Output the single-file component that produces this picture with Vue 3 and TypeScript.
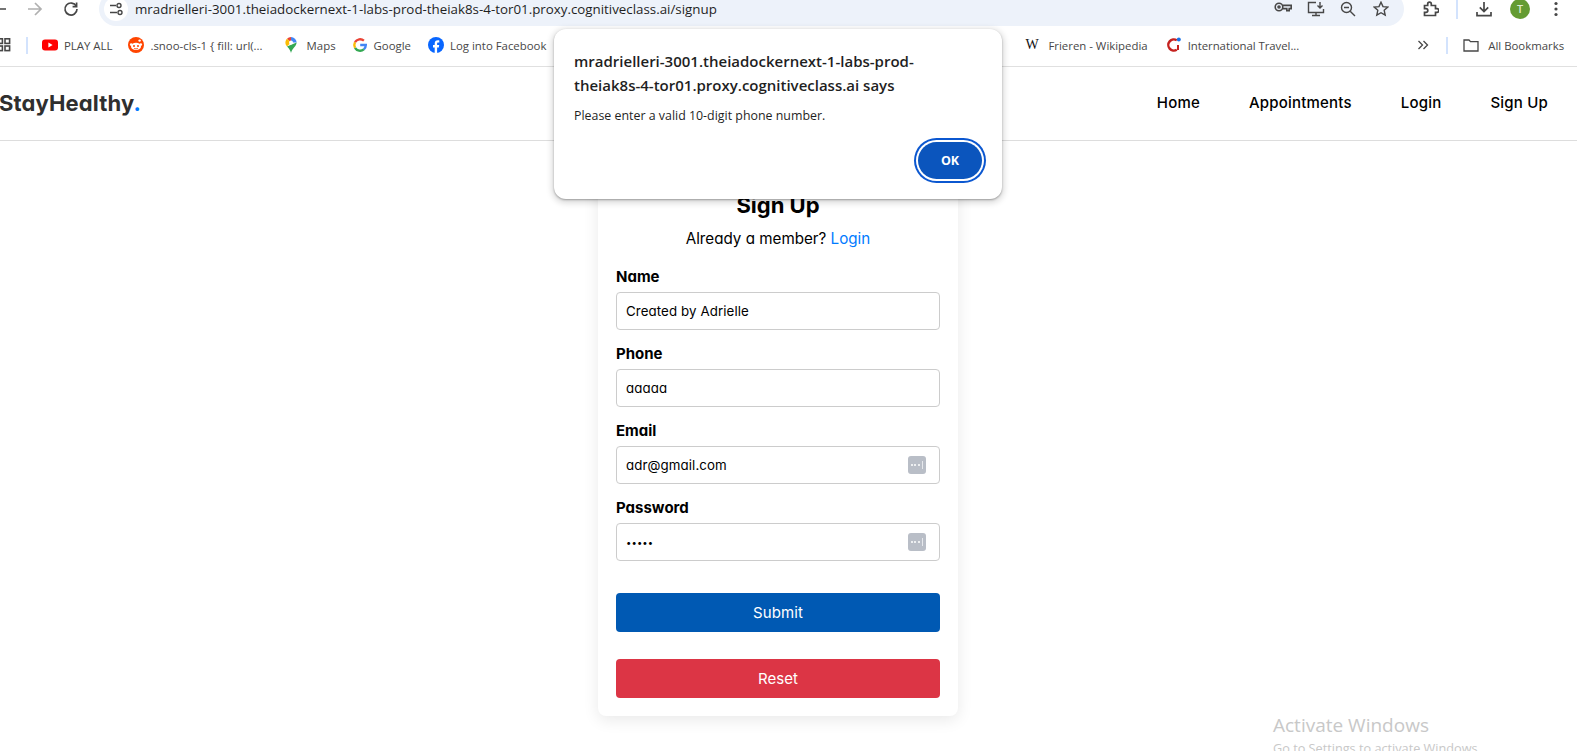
<script setup lang="ts">
import { ref } from 'vue'

const name = ref('Created by Adrielle')
const phone = ref('aaaaa')
const email = ref('adr@gmail.com')
const password = ref('aaaaa')
</script>

<template>
  <div class="screen">
    <!-- browser toolbar -->
    <div class="toolbar">
      <div class="cell">
        <svg width="16" height="16" viewBox="0 0 16 16" class="ico"><path d="M15 8H2M8 2 2 8l6 6" /></svg>
      </div>
      <div class="cell">
        <svg width="16" height="16" viewBox="0 0 16 16" class="ico muted"><path d="M1 8h13M8 2l6 6-6 6" /></svg>
      </div>
      <div class="cell">
        <svg width="16" height="16" viewBox="0 0 16 16" class="ico"><path d="M13.300 5.200A6 6 0 1 0 14 8" /><path d="M13.600 1.600v4h-4" /></svg>
      </div>
      <div class="urlbar">
        <div class="chip">
          <svg width="14" height="14" viewBox="0 0 14 14" class="ico thin">
            <path d="M1 3.500h6M1 10.500h7" />
            <circle cx="10" cy="3.500" r="2" />
            <circle cx="11" cy="10.500" r="2" />
          </svg>
        </div>
        <span class="url">mradrielleri-3001.theiadockernext-1-labs-prod-theiak8s-4-tor01.proxy.cognitiveclass.ai/signup</span>
        <div class="url-actions">
          <div class="ucell">
            <svg width="18" height="12" viewBox="0 0 18 12" class="ico key">
              <circle cx="5" cy="6" r="3.800" />
              <circle cx="5" cy="6" r="1" />
              <path d="M8.800 4.400h8.400v3.200h-2v2h-2.400v-2H8.800" />
            </svg>
          </div>
          <div class="ucell">
            <svg width="18" height="16" viewBox="0 0 18 16" class="ico thin">
              <path d="M9 1.500H1.500v10h15V8M5 14.500h8M9 11.500v3" />
              <path d="M13 1v6M10.500 4.600 13 7l2.500-2.400" />
            </svg>
          </div>
          <div class="ucell">
            <svg width="16" height="16" viewBox="0 0 16 16" class="ico thin">
              <circle cx="6.500" cy="6.500" r="5" />
              <path d="M4 6.500h5M10.200 10.200 15 15" />
            </svg>
          </div>
          <div class="ucell">
            <svg width="16" height="16" viewBox="0 0 16 16" class="ico thin">
              <path d="m8 1.200 2 4.400 4.800.5-3.600 3.200 1 4.800L8 11.700l-4.200 2.400 1-4.800-3.600-3.200 4.800-.5z" />
            </svg>
          </div>
        </div>
      </div>
      <div class="cell puzzle">
        <svg width="16" height="16" viewBox="0 0 16 16" class="ico">
          <path d="M1.500 4.500h3.200V3a1.800 1.800 0 0 1 3.600 0v1.500h4.200v3.200H14a1.800 1.800 0 0 1 0 3.600h-1.500v3.200h-11v-3.200H3a1.800 1.800 0 0 0 0-3.600H1.500z" />
        </svg>
      </div>
      <div class="divider"></div>
      <div class="cell download">
        <svg width="16" height="16" viewBox="0 0 16 16" class="ico">
          <path d="M8 1v9.500M3.800 6.400 8 10.600l4.200-4.200M1 11v3.600h14V11" />
        </svg>
      </div>
      <div class="cell">
        <div class="avatar">T</div>
      </div>
      <div class="cell">
        <svg width="4" height="16" viewBox="0 0 4 16"><circle cx="2" cy="2.500" r="1.600" fill="#474747" /><circle cx="2" cy="8" r="1.600" fill="#474747" /><circle cx="2" cy="13.500" r="1.600" fill="#474747" /></svg>
      </div>
    </div>

    <!-- bookmarks bar -->
    <div class="bookmarks">
      <svg class="apps" width="14" height="14" viewBox="0 0 14 14" fill="none" stroke="#474747" stroke-width="1.600">
        <rect x="0.800" y="0.800" width="4.600" height="4.600" />
        <rect x="8" y="0.800" width="4.600" height="4.600" />
        <rect x="0.800" y="8" width="4.600" height="4.600" />
        <rect x="8" y="8" width="4.600" height="4.600" />
      </svg>
      <div class="divider short"></div>
      <div class="bm yt">
        <svg width="16" height="16" viewBox="0 0 16 16"><rect y="2.500" width="16" height="11" rx="3" fill="#f00" /><path d="M6.400 5.500v5L10.600 8z" fill="#fff" /></svg>
        <span>PLAY ALL</span>
      </div>
      <div class="bm reddit">
        <svg width="16" height="16" viewBox="0 0 16 16">
          <circle cx="8" cy="8" r="8" fill="#ff4500" />
          <ellipse cx="8" cy="9.400" rx="5" ry="3.600" fill="#fff" />
          <circle cx="3.200" cy="7.600" r="1.300" fill="#fff" />
          <circle cx="12.800" cy="7.600" r="1.300" fill="#fff" />
          <circle cx="11.600" cy="3.600" r="1.200" fill="#fff" />
          <circle cx="6" cy="9" r="1" fill="#ff4500" />
          <circle cx="10" cy="9" r="1" fill="#ff4500" />
          <path d="M6 11.200c1 .8 3 .8 4 0" stroke="#ff4500" stroke-width=".8" fill="none" />
        </svg>
        <span>.snoo-cls-1 { fill: url(...</span>
      </div>
      <div class="bm maps">
        <svg width="16" height="16" viewBox="0 0 16 16">
          <path d="M8 0a5.600 5.600 0 0 1 5.600 5.600H8z" fill="#4285f4" />
          <path d="M8 0a5.600 5.600 0 0 0-4 1.700L8 5.600z" fill="#ea4335" />
          <path d="M2.400 5.600C2.400 4 3 2.700 4 1.700l4 3.900-4 4C3 8.400 2.400 7.200 2.400 5.600z" fill="#fbbc04" />
          <path d="M13.600 5.600c0 3.800-4.400 5.700-5.600 10.400-.5-2-1.800-4.400-4-6.400z" fill="#34a853" />
          <circle cx="8" cy="5.600" r="2" fill="#fff" />
        </svg>
        <span>Maps</span>
      </div>
      <div class="bm google">
        <svg width="16" height="16" viewBox="0 0 16 16" fill="none" stroke-width="2.400">
          <path d="M8.200 8h5.600a5.900 5.900 0 0 1-2 4.400" stroke="#4285f4" />
          <path d="M11.800 12.400a6 6 0 0 1-8.800-1.600" stroke="#34a853" />
          <path d="M3 10.800a6 6 0 0 1 0-5.600" stroke="#fbbc04" />
          <path d="M3 5.200a6 6 0 0 1 8.900-1.600" stroke="#ea4335" />
        </svg>
        <span>Google</span>
      </div>
      <div class="bm fb">
        <svg width="16" height="16" viewBox="0 0 16 16">
          <circle cx="8" cy="8" r="8" fill="#0866ff" />
          <path d="M6.700 16v-5.600H5V8h1.700V6.700C6.700 4.400 7.800 3.300 10 3.300c.5 0 1 .1 1.300.2v2.100h-1c-.9 0-1.200.4-1.200 1.200V8h2.100l-.4 2.400H9.100V16z" fill="#fff" />
        </svg>
        <span>Log into Facebook</span>
      </div>
      <div class="bm-gap"></div>
      <div class="bm wiki">
        <span class="wiki-w">W</span>
        <span>Frieren - Wikipedia</span>
      </div>
      <div class="bm travel">
        <svg width="16" height="16" viewBox="0 0 16 16" fill="none">
          <path d="M10.800 3.200a5.600 5.600 0 1 0 0 9.600" stroke="#c5221f" stroke-width="2.400" />
          <path d="M12 8v5" stroke="#c5221f" stroke-width="2" />
          <circle cx="12.800" cy="2.600" r="2" fill="#1a73e8" />
        </svg>
        <span class="travel-text">International Travel...</span>
      </div>
      <svg class="chevrons" width="12" height="10" viewBox="0 0 12 10" fill="none" stroke="#474747" stroke-width="1.300"><path d="m1.500 1 4 4-4 4M6.500 1l4 4-4 4" /></svg>
      <div class="divider short tail"></div>
      <div class="bm folder">
        <svg width="16" height="14" viewBox="0 0 16 14" fill="none" stroke="#474747" stroke-width="1.300"><path d="M1 2h5l1.500 1.600H15v9.400H1z" /></svg>
        <span>All Bookmarks</span>
      </div>
    </div>

    <!-- site nav -->
    <header class="nav">
      <div class="logo">StayHealthy<span class="logo-dot">.</span></div>
      <nav class="links">
        <a>Home</a>
        <a>Appointments</a>
        <a>Login</a>
        <a>Sign Up</a>
      </nav>
    </header>

    <main class="content">
      <form class="card" @submit.prevent>
        <h2>Sign Up</h2>
        <p class="member">Already a member? <a>Login</a></p>

        <label class="field">
          <span>Name</span>
          <input v-model="name" type="text" />
        </label>
        <label class="field">
          <span>Phone</span>
          <input v-model="phone" type="text" />
        </label>
        <label class="field">
          <span>Email</span>
          <div class="input-wrap">
            <input v-model="email" type="text" />
            <div class="pw-key"><i></i><i></i><i></i><b></b></div>
          </div>
        </label>
        <label class="field">
          <span>Password</span>
          <div class="input-wrap">
            <input v-model="password" class="pw" type="password" />
            <div class="pw-key"><i></i><i></i><i></i><b></b></div>
          </div>
        </label>

        <button class="btn submit" type="submit">Submit</button>
        <button class="btn reset" type="reset">Reset</button>
      </form>
    </main>

    <!-- browser alert -->
    <div class="alert">
      <div class="alert-title">mradrielleri-3001.theiadockernext-1-labs-prod-<br />theiak8s-4-tor01.proxy.cognitiveclass.ai says</div>
      <div class="alert-msg">Please enter a valid 10-digit phone number.</div>
      <div class="alert-actions">
        <button class="ok">OK</button>
      </div>
    </div>

    <div class="watermark">
      <div class="wm-big">Activate Windows</div>
      <div class="wm-small">Go to Settings to activate Windows.</div>
    </div>
  </div>
</template>

<style>
html,
body {
  margin: 0;
  background: #fff;
  overflow: hidden;
}
</style>

<style scoped>
.screen {
  position: relative;
  width: 1577px;
  height: 751px;
  overflow: hidden;
  background: #fff;
  font-family: Inter, 'Noto Sans', sans-serif;
  font-feature-settings: 'cv11';
  color: #000;
}

/* ---- chrome ---- */
.toolbar {
  display: flex;
  align-items: center;
  height: 34px;
  margin-top: -8px;
  margin-left: -19px;
}

.cell {
  flex: none;
  width: 36px;
  display: flex;
  align-items: center;
  justify-content: center;
}

.ico {
  fill: none;
  stroke: #474747;
  stroke-width: 1.7;
}

.ico.muted {
  stroke: #b0b0b0;
}

.ico.thin {
  stroke-width: 1.4;
}

.ico.key {
  stroke-width: 1.6;
}

.urlbar {
  flex: none;
  display: flex;
  align-items: center;
  width: 1305px;
  height: 34px;
  margin-left: 10px;
  background: #edf2fa;
  border-radius: 17px;
}

.chip {
  flex: none;
  width: 24px;
  height: 24px;
  margin-left: 5px;
  border-radius: 50%;
  background: #fff;
  display: flex;
  align-items: center;
  justify-content: center;
}

.url {
  margin-left: 7px;
  font-family: 'Open Sans', sans-serif;
  font-feature-settings: normal;
  font-size: 13.33px;
  color: #1f1f1f;
  white-space: nowrap;
}

.url-actions {
  display: flex;
  margin-left: auto;
  margin-right: 7px;
}

.ucell {
  width: 32.5px;
  display: flex;
  justify-content: center;
}

.puzzle {
  margin-left: 9px;
}

.divider {
  flex: none;
  width: 2px;
  height: 20px;
  margin-left: 7px;
  background: #d3e3fd;
}

.download {
  margin-left: 8px;
}

.avatar {
  width: 20px;
  height: 20px;
  border-radius: 50%;
  background: #649b32;
  color: #dfeccf;
  font-size: 10px;
  font-weight: 600;
  display: flex;
  align-items: center;
  justify-content: center;
}

.bookmarks {
  display: flex;
  align-items: center;
  height: 38px;
  padding-bottom: 2px;
  border-bottom: 1px solid #e0e0e0;
  font-family: 'Open Sans', sans-serif;
  font-feature-settings: normal;
  font-size: 11.4px;
  color: #474747;
  white-space: nowrap;
}

.apps {
  flex: none;
  margin-left: -3px;
}

.divider.short {
  height: 17px;
  margin-left: 15px;
}

.bm {
  flex: none;
  display: flex;
  align-items: center;
  gap: 6px;
}

.yt {
  margin-left: 14px;
}

.reddit {
  margin-left: 16px;
}

.maps {
  margin-left: 20px;
  gap: 8px;
}

.google {
  margin-left: 16px;
}

.fb {
  margin-left: 17px;
}

.bm-gap {
  flex: none;
  width: 479px;
}

.wiki-w {
  width: 17px;
  font-family: 'Liberation Serif', serif;
  font-size: 14px;
  color: #111;
}

.travel {
  margin-left: 18px;
}

.travel-text {
  letter-spacing: -0.05px;
}

.chevrons {
  margin-left: 118px;
}

.divider.tail {
  margin-left: 17px;
}

.folder {
  margin-left: 15px;
  gap: 9px;
}

/* ---- site ---- */
.nav {
  display: flex;
  align-items: center;
  justify-content: space-between;
  height: 71px;
  padding: 0 29px 2px 0;
  border-bottom: 1px solid #ddd;
}

.logo {
  margin-left: -1px;
  font-size: 22px;
  font-weight: 700;
  letter-spacing: 0.15px;
  color: #2f2f2f;
}

.logo-dot {
  color: #007bff;
}

.links {
  display: flex;
  gap: 49px;
  font-size: 15px;
  font-weight: 470;
  letter-spacing: 0.2px;
}

.content {
  display: flex;
  justify-content: center;
  padding-top: 36px;
  padding-right: 21px;
}

.card {
  width: 324px;
  padding: 12px 18px 18px;
  background: #fff;
  border-radius: 8px;
  box-shadow: 0 4px 16px rgba(0, 0, 0, 0.09);
}

h2 {
  margin: 0;
  font-size: 22px;
  line-height: 33px;
  font-weight: 700;
  text-align: center;
}

.member {
  margin: 6px 0 0;
  height: 25px;
  font-size: 15.2px;
  line-height: 22px;
  text-align: center;
}

.member a {
  color: #007bff;
}

.field {
  display: block;
  margin-top: 13px;
}

.field > span {
  display: block;
  height: 22px;
  margin-bottom: 4px;
  font-size: 15px;
  line-height: 22px;
  font-weight: 700;
}

.input-wrap {
  position: relative;
}

input {
  display: block;
  width: 100%;
  height: 38px;
  box-sizing: border-box;
  padding: 0 9px;
  border: 1px solid #ccc;
  border-radius: 4px;
  outline: none;
  font-family: inherit;
  font-feature-settings: inherit;
  font-size: 13.3px;
  letter-spacing: 0.1px;
  color: #000;
  background: #fff;
}

input.pw {
  font-size: 9.5px;
}

.pw-key {
  position: absolute;
  top: 10px;
  right: 14px;
  width: 18px;
  height: 18px;
  border-radius: 3px;
  background: #b9bec7;
  display: flex;
  align-items: center;
  justify-content: center;
  gap: 1.5px;
}

.pw-key i {
  width: 2px;
  height: 2px;
  border-radius: 50%;
  background: #fff;
}

.pw-key b {
  width: 1px;
  height: 8px;
  margin-left: 1px;
  background: #e6e8ec;
}

.btn {
  display: block;
  width: 100%;
  height: 39px;
  border: none;
  border-radius: 4px;
  color: #fff;
  font-family: inherit;
  font-feature-settings: inherit;
  font-size: 15px;
  font-weight: 420;
  letter-spacing: 0.1px;
}

.submit {
  margin-top: 32px;
  background: #0059b3;
}

.reset {
  margin-top: 27px;
  background: #dc3545;
}

/* ---- alert dialog ---- */
.alert {
  position: absolute;
  top: 29px;
  left: 554px;
  width: 448px;
  height: 170px;
  box-sizing: border-box;
  padding: 20px 20px 0;
  background: #fff;
  border-radius: 12px;
  box-shadow: 0 1px 2px rgba(0, 0, 0, 0.3), 0 2px 6px 2px rgba(0, 0, 0, 0.15);
  font-family: 'Open Sans', sans-serif;
  font-feature-settings: normal;
  color: #1f1f1f;
}

.alert-title {
  font-size: 15px;
  line-height: 24px;
  font-weight: 600;
}

.alert-msg {
  margin-top: 10px;
  font-size: 12.4px;
  line-height: 18px;
}

.alert-actions {
  display: flex;
  justify-content: flex-end;
  margin-top: 17px;
}

.ok {
  width: 64px;
  height: 37px;
  border: none;
  border-radius: 19px;
  background: #0b55bd;
  color: #fff;
  font-family: inherit;
  font-size: 12.5px;
  font-weight: 700;
  box-shadow: 0 0 0 2px #fff, 0 0 0 4px #0b57d0;
}

.watermark {
  position: absolute;
  left: 1273px;
  top: 712px;
  font-family: 'Open Sans', sans-serif;
  font-feature-settings: normal;
  color: #c8c8c8;
  white-space: nowrap;
}

.wm-big {
  font-size: 19px;
  line-height: 26px;
}

.wm-small {
  font-size: 12.7px;
  line-height: 20px;
}
</style>
